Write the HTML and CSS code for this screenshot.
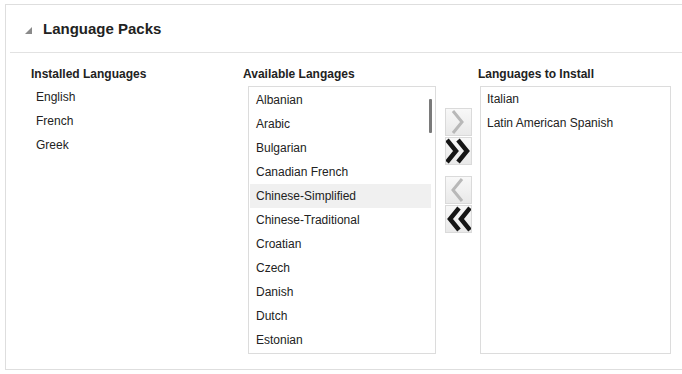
FILE: index.html
```html
<!DOCTYPE html>
<html>
<head>
<meta charset="utf-8">
<link rel="stylesheet" href="styles.css">
</head>
<body>
<div class="panel">
  <div class="header">
    <svg class="disclosure" width="7" height="7" viewBox="0 0 7 7"><polygon points="7,0 7,7 0,7" fill="#8a8a8a"/></svg>
    <h1 class="title">Language Packs</h1>
  </div>
  <div class="content">
    <div class="col col-installed">
      <div class="col-title">Installed Languages</div>
      <ul class="plain-list">
        <li>English</li>
        <li>French</li>
        <li>Greek</li>
      </ul>
    </div>
    <div class="col col-available">
      <div class="col-title">Available Langages</div>
      <div class="listbox">
        <ul class="box-list">
          <li>Albanian</li>
          <li>Arabic</li>
          <li>Bulgarian</li>
          <li>Canadian French</li>
          <li class="hover">Chinese-Simplified</li>
          <li>Chinese-Traditional</li>
          <li>Croatian</li>
          <li>Czech</li>
          <li>Danish</li>
          <li>Dutch</li>
          <li>Estonian</li>
        </ul>
        <div class="thumb"></div>
      </div>
    </div>
    <div class="shuttle">
      <div class="btn-group">
        <button class="btn" aria-label="Move">
          <svg width="27" height="28" viewBox="0 0 27 28"><polyline points="8,3 17,14 8,25" fill="none" stroke="#b8b8b8" stroke-width="3"/></svg>
        </button>
        <button class="btn" aria-label="Move all">
          <svg width="27" height="28" viewBox="0 0 27 28"><polyline points="2,3 11,14 2,25" fill="none" stroke="#151515" stroke-width="4.5"/><polyline points="13,3 22,14 13,25" fill="none" stroke="#151515" stroke-width="4.5"/></svg>
        </button>
      </div>
      <div class="btn-group">
        <button class="btn" aria-label="Remove">
          <svg width="27" height="28" viewBox="0 0 27 28"><polyline points="17,3 8,14 17,25" fill="none" stroke="#b8b8b8" stroke-width="3"/></svg>
        </button>
        <button class="btn" aria-label="Remove all">
          <svg width="27" height="28" viewBox="0 0 27 28"><polyline points="14,3 5,14 14,25" fill="none" stroke="#151515" stroke-width="4.5"/><polyline points="25,3 16,14 25,25" fill="none" stroke="#151515" stroke-width="4.5"/></svg>
        </button>
      </div>
    </div>
    <div class="col col-install">
      <div class="col-title">Languages to Install</div>
      <div class="listbox listbox-right">
        <ul class="box-list">
          <li>Italian</li>
          <li>Latin American Spanish</li>
        </ul>
      </div>
    </div>
  </div>
</div>
</body>
</html>
```
FILE: styles.css
```css
html, body {
  margin: 0;
  padding: 0;
  background: #ffffff;
}
body {
  font-family: "Liberation Sans", Arial, sans-serif;
  font-size: 12px;
  color: #222;
}
.panel {
  margin: 4px 0 0 5px;
  border: 1px solid #dedede;
  border-right: none;
  height: 364px;
}
.header {
  height: 47px;
  margin-left: 4px;
  border-bottom: 1px solid #e2e2e2;
  display: flex;
  align-items: center;
  padding-left: 15px;
}
.disclosure {
  display: block;
  margin-top: 3px;
}
.title {
  margin: 1px 0 0 11px;
  font-size: 15px;
  font-weight: bold;
  color: #222;
  line-height: 18px;
}
.content {
  display: flex;
  align-items: flex-start;
  padding: 13px 0 0 25px;
}
.col-title {
  font-weight: bold;
  line-height: 16px;
  height: 16px;
  color: #222;
  white-space: nowrap;
}
.col-installed {
  width: 212px;
}
.plain-list {
  list-style: none;
  margin: 3px 0 0 0;
  padding: 0 0 0 5px;
}
.plain-list li,
.box-list li {
  height: 24px;
  line-height: 24px;
  white-space: nowrap;
  color: #222;
}
.col-available {
  width: 193px;
}
.listbox {
  position: relative;
  margin: 4px 0 0 5px;
  width: 188px;
  height: 268px;
  box-sizing: border-box;
  border: 1px solid #dcdcdc;
  background: #fff;
  overflow: hidden;
}
.box-list {
  list-style: none;
  margin: 0;
  padding: 1px 0 0 0;
}
.box-list li {
  padding-left: 6px;
  margin: 0 4px 0 1px;
}
.box-list li.hover {
  background: #f0f0f0;
}
.thumb {
  position: absolute;
  top: 12px;
  right: 3px;
  width: 3px;
  height: 34px;
  background: #7a7a7a;
  border-radius: 1px;
}
.shuttle {
  margin: 42px 0 0 9px;
  width: 27px;
  display: flex;
  flex-direction: column;
  gap: 11px;
}
.btn-group {
  display: flex;
  flex-direction: column;
  gap: 1px;
}
.btn {
  display: block;
  width: 27px;
  height: 28px;
  padding: 0;
  margin: 0;
  box-sizing: border-box;
  border: 1px solid #dadada;
  background: linear-gradient(#f8f8f8, #e9e9e9);
  overflow: hidden;
}
.btn svg {
  display: block;
  margin: -1px;
}
.col-install {
  margin-left: 6px;
}
.listbox-right {
  margin-left: 2px;
  width: 191px;
}
.listbox-right .box-list {
  padding-top: 0;
}
.listbox-right .box-list li {
  padding-left: 5px;
}
```
